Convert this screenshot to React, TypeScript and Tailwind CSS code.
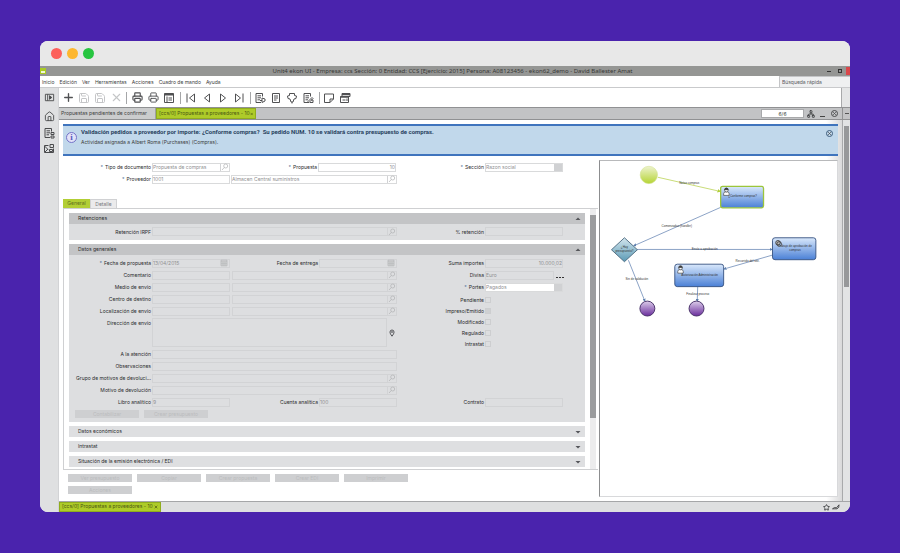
import { ReactNode } from "react";
import { Home, Network, Plus, Printer, Save, Star, X } from "lucide-react";

const menus = ["Inicio", "Edición", "Ver", "Herramientas", "Acciones", "Cuadro de mando", "Ayuda"];

function Glyph({ children, className = "" }: { children: ReactNode; className?: string }) {
  return (
    <svg
      viewBox="0 0 12 12"
      className={`h-3 w-3 shrink-0 ${className}`}
      fill="none"
      stroke="currentColor"
      strokeWidth="1"
      strokeLinejoin="round"
    >
      {children}
    </svg>
  );
}

function DocGlyph({ children }: { children?: ReactNode }) {
  return (
    <Glyph>
      <path d="M2 1.5h6.5v3M2 1.5v9h5M3.5 3.8H7M3.5 5.8H7M3.5 7.8h2.5" />
      {children}
    </Glyph>
  );
}

function ToolButton({ label, muted, children }: { label: string; muted?: boolean; children: ReactNode }) {
  return (
    <button
      type="button"
      aria-label={label}
      className={`flex w-4 shrink-0 items-center justify-center ${muted ? "text-[#c4c5c7]" : "text-[#505153]"}`}
    >
      {children}
    </button>
  );
}

function Separator() {
  return <span className="mx-px h-3 w-px shrink-0 bg-[#a5a6a8]" />;
}

function Magnifier() {
  return (
    <svg viewBox="0 0 8 8" className="h-2 w-2" fill="none" stroke="currentColor" strokeWidth="0.7">
      <circle cx="4.7" cy="3" r="2" />
      <path d="M3.3 4.5 1 7" />
    </svg>
  );
}

function CalendarMark() {
  return (
    <svg viewBox="0 0 8 8" className="h-2 w-2" fill="none" stroke="currentColor" strokeWidth="0.7">
      <path d="M1 1.2h6v5.6H1zM1 2.8h6M3 2.8v4M5 2.8v4M1 4.8h6" />
    </svg>
  );
}

type FieldProps = {
  id: string;
  value?: string;
  label?: string;
  icon?: "search" | "date" | "box";
  white?: boolean;
  right?: boolean;
  className?: string;
};

function Field({ id, value = "", label, icon, white, right, className = "w-[78px]" }: FieldProps) {
  return (
    <span
      className={`flex h-[9px] shrink-0 items-center border ${
        white ? "border-[#d9dadb] bg-white" : "border-[#d2d3d5]"
      } ${className}`}
    >
      <input
        id={id}
        aria-label={label}
        defaultValue={value}
        className={`h-full w-full min-w-0 bg-transparent text-[5px] leading-[7px] text-[#8f9092] outline-none ${
          right ? "text-right" : ""
        }`}
      />
      {icon === "search" && (
        <span className="flex h-full w-[9px] shrink-0 items-center border-l border-[#d2d3d5] text-[#b0b1b3]">
          <Magnifier />
        </span>
      )}
      {icon === "date" && (
        <span className="flex h-full w-[9px] shrink-0 items-center text-[#b0b1b3]">
          <CalendarMark />
        </span>
      )}
      {icon === "box" && <span className="h-full w-2 shrink-0 bg-[#d0d1d3]" />}
    </span>
  );
}

function Label({ id, children, req, className = "w-[83px]" }: { id: string; children: ReactNode; req?: boolean; className?: string }) {
  return (
    <label
      htmlFor={id}
      className={`shrink-0 truncate pr-px text-right text-[5px] leading-[10px] text-[#2a2b2d] ${className}`}
    >
      {req && <span className="mr-0.5 text-[#55759c]">*</span>}
      {children}
    </label>
  );
}

function Row({ children }: { children: ReactNode }) {
  return <div className="flex h-[10px] items-center">{children}</div>;
}

function Section({ title, children }: { title: string; children: ReactNode }) {
  return (
    <section className="bg-[#dddee0]">
      <h2 className="flex h-[11px] items-center justify-between bg-[#c3c4c6] pl-[9px] pr-1 text-[5px] text-[#2a2b2d]">
        {title}
        <svg viewBox="0 0 6 4" className="h-1 w-1.5">
          <path d="M3 .5 5.5 3h-5z" fill="#55565a" />
        </svg>
      </h2>
      {children}
    </section>
  );
}

function Collapsed({ title }: { title: string }) {
  return (
    <button
      type="button"
      className="flex h-[11px] w-full shrink-0 items-center justify-between bg-[#dedfe1] pl-[9px] pr-1 text-[5px] text-[#2a2b2d]"
    >
      {title}
      <svg viewBox="0 0 6 4" className="h-1 w-1.5">
        <path d="M3 3.5.5 1h5z" fill="#55565a" />
      </svg>
    </button>
  );
}

function GrayButton({ children }: { children: ReactNode }) {
  return (
    <button
      type="button"
      className="h-2 w-[64px] shrink-0 truncate bg-[#cecfd1] text-center text-[5px] leading-[8px] text-[#bbbcbe]"
    >
      {children}
    </button>
  );
}

const lookups = [
  ["comentario", "Comentario"],
  ["medio", "Medio de envío"],
  ["centro", "Centro de destino"],
  ["localizacion", "Localización de envío"],
];

const checks = [
  { id: "pendiente", label: "Pendiente" },
  { id: "impreso", label: "Impreso/Emitido", on: true },
  { id: "modificado", label: "Modificado" },
  { id: "regulado", label: "Regulado" },
  { id: "intrastat", label: "Intrastat" },
];

function DatosGenerales() {
  return (
    <Section title="Datos generales">
      <div className="flex pt-[3px]">
        <div className="flex w-[328px] shrink-0 flex-col gap-0.5">
          <Row>
            <Label id="fecha" req>Fecha de propuesta</Label>
            <Field id="fecha" value="13/04/2015" icon="date" />
            <Label id="entrega" className="w-[89px]">Fecha de entrega</Label>
            <Field id="entrega" icon="date" />
          </Row>
          {lookups.map(([id, label]) => (
            <Row key={id}>
              <Label id={id}>{label}</Label>
              <Field id={id} />
              <span className="w-0.5" />
              <Field id={`${id}-desc`} label={`${label}, descripción`} icon="search" className="w-[165px]" />
            </Row>
          ))}
          <div className="flex h-[29px]">
            <Label id="direccion" className="w-[83px] self-start">Dirección de envío</Label>
            <textarea
              id="direccion"
              className="h-full w-[235px] shrink-0 resize-none border border-[#d2d3d5] text-[5px] outline-none"
            />
            <svg viewBox="0 0 6 8" className="ml-0.5 h-2 w-1.5 self-center" fill="none" stroke="#55565a">
              <path d="M3 7.2C1.6 5.3 1 4.300 1 3a2 2 0 0 1 4 0c0 1.300-.6 2.300-2 4.200z" />
              <circle cx="3" cy="3" r=".5" />
            </svg>
          </div>
          <Row>
            <Label id="atencion">A la atención</Label>
            <Field id="atencion" className="w-[245px]" />
          </Row>
          <Row>
            <Label id="observaciones">Observaciones</Label>
            <Field id="observaciones" className="w-[245px]" />
          </Row>
          <Row>
            <Label id="grupo">Grupo de motivos de devoluci...</Label>
            <Field id="grupo" icon="search" className="w-[245px]" />
          </Row>
          <Row>
            <Label id="motivo">Motivo de devolución</Label>
            <Field id="motivo" icon="search" className="w-[245px]" />
          </Row>
          <Row>
            <Label id="libro">Libro analítico</Label>
            <Field id="libro" value="9" />
            <Label id="cuenta" className="w-[89px]">Cuenta analítica</Label>
            <Field id="cuenta" value="100" />
          </Row>
        </div>
        <div className="flex flex-col gap-0.5">
          <Row>
            <Label id="suma" className="w-[88px]">Suma importes</Label>
            <Field id="suma" value="10.000,02" right />
          </Row>
          <Row>
            <Label id="divisa" className="w-[88px]">Divisa</Label>
            <Field id="divisa" value="Euro" className="w-[69px]" />
            <button type="button" aria-label="Elegir divisa" className="ml-0.5 flex gap-px self-end pb-0.5">
              <span className="h-px w-0.5 bg-[#333]" />
              <span className="h-px w-0.5 bg-[#333]" />
              <span className="h-px w-0.5 bg-[#333]" />
            </button>
          </Row>
          <Row>
            <Label id="portes" req className="w-[88px]">Portes</Label>
            <Field id="portes" value="Pagados" white icon="box" />
          </Row>
          <div>
            {checks.map((c) => (
              <div key={c.id} className="flex h-[11px] items-center">
                <Label id={c.id} className="w-[88px]">{c.label}</Label>
                <input
                  id={c.id}
                  type="checkbox"
                  defaultChecked={c.on}
                  className="h-[6px] w-[6px] appearance-none border border-[#cdced0] checked:bg-[#cfd0d2]"
                />
              </div>
            ))}
          </div>
          <div className="mt-auto">
            <Row>
              <Label id="contrato" className="w-[88px]">Contrato</Label>
              <Field id="contrato" />
            </Row>
          </div>
        </div>
      </div>
      <div className="flex gap-[5px] pb-1 pl-[6px] pt-[3px]">
        <GrayButton>Contabilizar</GrayButton>
        <GrayButton>Crear presupuesto</GrayButton>
      </div>
    </Section>
  );
}

function Person({ x, y }: { x: number; y: number }) {
  return (
    <g transform={`translate(${x} ${y})`} stroke="#333" strokeWidth=".6" fill="#fff">
      <path d="M0 7.500V5.800Q0 4.300 1.500 4h2.500Q5.500 4.300 5.500 5.800v1.700z" />
      <circle cx="2.750" cy="2.100" r="1.900" />
      <path d="M1 1.800Q1 .2 2.750.2T4.500 1.800z" fill="#333" />
    </g>
  );
}

function Diagram() {
  return (
    <svg viewBox="0 0 238 336" className="w-full" fontFamily="Liberation Sans, sans-serif" fontSize="3" fill="#333" textAnchor="middle">
      <defs>
        <linearGradient id="task" x1="0" y1="0" x2="0" y2="1">
          <stop offset="0" stopColor="#d9e8fb" />
          <stop offset="1" stopColor="#4a80d6" />
        </linearGradient>
        <linearGradient id="start" x1="0" y1="0" x2="0" y2="1">
          <stop offset="0" stopColor="#eef3cf" />
          <stop offset="1" stopColor="#b5d433" />
        </linearGradient>
        <linearGradient id="end" x1="0" y1="0" x2="0" y2="1">
          <stop offset="0" stopColor="#dccdea" />
          <stop offset="1" stopColor="#6a2d9c" />
        </linearGradient>
        <linearGradient id="gate" x1="0" y1="0" x2="0" y2="1">
          <stop offset="0" stopColor="#d3e6ee" />
          <stop offset="1" stopColor="#5b9ab5" />
        </linearGradient>
        <marker id="arrow" markerWidth="4" markerHeight="4" refX="3" refY="2" orient="auto">
          <path d="M0 0 4 2 0 4z" fill="#5d7fae" />
        </marker>
        <marker id="arrow-green" markerWidth="4" markerHeight="4" refX="3" refY="2" orient="auto">
          <path d="M0 0 4 2 0 4z" fill="#b2cf3a" />
        </marker>
      </defs>

      <path d="M58 16.300 120.500 30.500" stroke="#c3d868" strokeWidth=".9" markerEnd="url(#arrow-green)" />
      <g stroke="#6f8cb8" strokeWidth=".8" markerEnd="url(#arrow)">
        <path d="M121 46.500 34 85" />
        <path d="M37 88.700H172.500" />
        <path d="M172.500 94.500 124.500 108.300" />
        <path d="M28.500 99.500 45 140.500" />
        <path d="M98 126 97.500 140.500" />
      </g>

      <circle cx="49" cy="14" r="8.700" fill="url(#start)" stroke="#d5e296" strokeWidth=".6" />
      <rect x="121" y="25.500" width="43" height="21.500" rx="2" fill="url(#task)" stroke="#9cc53b" strokeWidth="1.300" />
      <path d="M24.500 77 37.500 89 24.500 101 11.500 89z" fill="url(#gate)" stroke="#48667c" strokeWidth=".9" />
      <rect x="173" y="77" width="43.500" height="22" rx="2.500" fill="url(#task)" stroke="#35507f" strokeWidth=".9" />
      <rect x="75" y="103.500" width="49" height="22.500" rx="2.500" fill="url(#task)" stroke="#35507f" strokeWidth=".9" />
      <circle cx="47.500" cy="148" r="7.500" fill="url(#end)" stroke="#3f2860" strokeWidth=".9" />
      <circle cx="96.800" cy="148" r="7.500" fill="url(#end)" stroke="#3f2860" strokeWidth=".9" />

      <Person x={124} y={27} />
      <Person x={78} y={105} />
      <g fill="none" stroke="#333" strokeWidth=".8">
        <circle cx="178.500" cy="82" r="2.300" fill="#bbb" />
        <circle cx="179.700" cy="83.200" r="2.300" />
      </g>

      <text x="89.500" y="23.500">Notas compras</text>
      <text x="143" y="36.500">¿Conforme compras?</text>
      <text x="77" y="66">Comenzadas (handler)</text>
      <text x="24.500" y="87">¿Hay</text>
      <text x="24.500" y="91">presupuesto?</text>
      <text x="105" y="89">Envío a aprobación</text>
      <text x="195.500" y="86">Trabajo de aprobación de</text>
      <text x="195.500" y="90">compras</text>
      <text x="148" y="101">Recurrido del sist.</text>
      <text x="100" y="115.500">Autorización Administración</text>
      <text x="37" y="119.500">Sin de validación</text>
      <text x="98" y="134">Finalizar proceso</text>
    </svg>
  );
}

export default function App() {
  return (
    <div className="flex min-h-screen bg-[#4a23ad] py-[41px] pl-10 pr-[50px] font-[Inter,Arial,sans-serif] text-[5px] text-[#3d3e40]">
      <main className="flex min-w-0 flex-1 flex-col overflow-hidden rounded-lg bg-white">
        <div className="flex h-[25px] items-center gap-[5px] bg-[#e8e8e8] pl-[11px]">
          <span className="h-[11px] w-[11px] rounded-full bg-[#fc605b]" />
          <span className="h-[11px] w-[11px] rounded-full bg-[#fdb72f]" />
          <span className="h-[11px] w-[11px] rounded-full bg-[#27c540]" />
        </div>

        <header className="flex h-[10px] items-center bg-[#959694]">
          <span className="flex h-1.5 w-1.5 items-end bg-[#aacb24] p-px">
            <span className="h-0.5 w-full bg-[#f2f7d8]" />
          </span>
          <h1 className="min-w-0 flex-1 pl-8 text-center font-['Noto_Sans',sans-serif] text-[6px] leading-[10px] text-[#353634]">
            Unit4 ekon UI - Empresa: ccs Sección: 0 Entidad: CCS [Ejercicio: 2015] Persona: A08123456 - ekon62_demo - David Ballester Amat
          </h1>
          <button type="button" aria-label="Minimizar" className="mr-[7px] h-px w-1 bg-[#333]" />
          <button type="button" aria-label="Restaurar" className="mr-1 h-1 w-1 border border-[#333]" />
          <button type="button" aria-label="Cerrar" className="h-2 w-1 bg-[#d9474b]" />
        </header>

        <nav className="flex h-3 items-center border-b border-[#c9cacc] pl-0.5">
          <ul className="flex flex-1 gap-[5px] leading-[10px]">
            {menus.map((m) => (
              <li key={m}>
                <button type="button">{m}</button>
              </li>
            ))}
          </ul>
          <input
            aria-label="Búsqueda rápida"
            placeholder="Búsqueda rápida"
            className="h-[11px] w-[71px] border-l border-t border-[#c4c5c7] bg-[#eff0f1] pl-0.5 text-[5px] outline-none placeholder:text-[#5c5d5f]"
          />
        </nav>

        <div className="flex min-h-0 flex-1">
          <aside className="flex w-[19px] shrink-0 flex-col items-center border-r border-[#d2d3d5] bg-[#dfe0e1] text-[#4a4b4d]">
            <button type="button" aria-label="Panel" className="mt-[4px]">
              <Glyph className="h-[11px] w-[11px]">
                <path d="M1.500 2.500h9v7h-9zM4 2.500v7" />
                <path d="m6 4 2.500 2L6 8z" fill="currentColor" />
              </Glyph>
            </button>
            <button type="button" aria-label="Inicio" className="mt-[8px]">
              <Home size={11} strokeWidth={2} />
            </button>
            <button type="button" aria-label="Documentos" className="mt-[5px]">
              <DocGlyph>
                <path d="M8 5.500h3v2H8zM8 9h3v2H8z" />
              </DocGlyph>
            </button>
            <button type="button" aria-label="Procesos" className="mt-1">
              <Glyph>
                <path d="M5.500 2.500h-4v7h9v-4M1.500 3l3.500 3.500M2 9l3-3M7 1.500h3.500v3H7zM6.500 6.500h3v2h-3z" />
              </Glyph>
            </button>
          </aside>

          <div className="flex min-w-0 flex-1 flex-col">
            <div className="flex h-[19px] shrink-0">
              <div className="flex min-w-0 flex-1 items-center border-r border-[#a8a9ab] pl-px">
                <ToolButton label="Nuevo"><Plus size={13} strokeWidth={2.500} /></ToolButton>
                <ToolButton label="Guardar" muted><Save size={12} /></ToolButton>
                <ToolButton label="Guardar y cerrar" muted><Save size={12} /></ToolButton>
                <ToolButton label="Eliminar" muted><X size={13} /></ToolButton>
                <span className="w-px" />
                <Separator />
                <span className="w-px" />
                <ToolButton label="Imprimir"><Printer size={11} strokeWidth={2.500} /></ToolButton>
                <ToolButton label="Imprimir listado"><Printer size={11} /></ToolButton>
                <ToolButton label="Tabla">
                  <Glyph>
                    <path d="M1.500 1.500h9v9h-9zM4 4.500v6M5.500 6h3.500M5.500 8h3.500" />
                    <path d="M1.500 2.500h9" strokeWidth="2" />
                  </Glyph>
                </ToolButton>
                <span className="w-0.5" />
                <Separator />
                <span className="w-px" />
                <ToolButton label="Primero">
                  <Glyph><path d="M2 1.500v9M9.500 2 4.500 6l5 4z" /></Glyph>
                </ToolButton>
                <ToolButton label="Anterior">
                  <Glyph><path d="M8.500 2 3.500 6l5 4z" /></Glyph>
                </ToolButton>
                <ToolButton label="Siguiente">
                  <Glyph><path d="m3.500 2 5 4-5 4z" /></Glyph>
                </ToolButton>
                <ToolButton label="Último">
                  <Glyph><path d="M10 1.500v9M2.500 2l5 4-5 4z" /></Glyph>
                </ToolButton>
                <span className="w-0.5" />
                <Separator />
                <ToolButton label="Enviar documento">
                  <DocGlyph><path d="M6 8.500h2M8 6l3 1v2l-3 1.500z" /></DocGlyph>
                </ToolButton>
                <ToolButton label="Documento">
                  <Glyph><path d="M2.500 1.500h7v9h-7zM4 4h4M4 6h4M4 8h2.500" /></Glyph>
                </ToolButton>
                <ToolButton label="Flujo">
                  <Glyph><path d="M3.500 1.500h5v2l2 .5-.5 2.500-2 .5-1 3H5l-1-3-2-.5L1.500 4l2-.5zM6 10v1.500" /></Glyph>
                </ToolButton>
                <ToolButton label="Editar documento">
                  <DocGlyph><path d="m6 9.500 4-4 1 1-4 4zM9 8h2v2.500H8" /></DocGlyph>
                </ToolButton>
                <span className="w-0.5" />
                <Separator />
                <ToolButton label="Nota">
                  <Glyph><path d="M1.500 2h9v5L7 10.500H1.500zM10.500 7H7v3.500" /></Glyph>
                </ToolButton>
                <ToolButton label="Historial">
                  <Glyph>
                    <path d="M3 1.500h8v3H3zM1.500 4.500h8v6h-8zM3.500 8h3M8 6.500v2.500" />
                    <path d="M3 2.500h8M1.500 5h8" strokeWidth="1.500" />
                  </Glyph>
                </ToolButton>
              </div>
              <div className="w-2 bg-[#e4e5e6]" />
            </div>

            <div className="flex h-[13px] shrink-0 items-center border-y border-[#909193] bg-[#c2c3c5]">
              <button type="button" className="h-full w-[97px] truncate border-r border-[#a0a1a3] bg-[#cbcccd] pl-0.5 text-left">
                Propuestas pendientes de confirmar
              </button>
              <button type="button" className="flex h-full w-[100px] items-center justify-between border border-[#90ad1d] bg-[#aecb29] px-0.5 text-[#4a5613]">
                <span className="whitespace-nowrap">[ccs/0] Propuestas a proveedores - 10</span>
                <X size={4} strokeWidth={4} />
              </button>
              <span className="flex-1" />
              <input
                aria-label="Registro"
                defaultValue="6/6"
                className="h-[9px] w-[43px] border border-[#a8a9ab] bg-white text-center text-[5px] outline-none"
              />
              <button type="button" aria-label="Esquema" className="ml-[3px]"><Network size={8} strokeWidth={2.500} /></button>
              <button type="button" aria-label="Minimizar panel" className="ml-[5px] mt-1.5 h-px w-[5px] bg-[#444]" />
              <button type="button" aria-label="Cerrar panel" className="ml-1.5 flex h-[7px] w-[7px] items-center justify-center rounded-full border border-[#4a4b4d]">
                <X size={5} strokeWidth={3} />
              </button>
              <span className="ml-1 flex h-full w-2 items-center border-l border-[#909193] pl-0.5">
                <span className="h-px w-1 bg-[#555]" />
              </span>
            </div>

            <div className="flex min-h-0 flex-1">
              <div className="flex min-w-0 flex-1 flex-col bg-linear-to-r from-white from-98% to-[#d9d9da] p-1">
                <section className="flex h-8 shrink-0 items-start border-y-2 border-[#3f74bd] bg-[#c1d8eb] pt-0.5">
                  <span className="ml-[3px] mt-1 flex h-[11px] w-[11px] shrink-0 items-center justify-center rounded-full border border-[#7474c8] bg-[#e2e2f8] font-['Liberation_Serif',serif] text-[9px] font-bold leading-none text-[#5959bd]">
                    i
                  </span>
                  <div className="ml-1 min-w-0 flex-1">
                    <p className="font-[Roboto,sans-serif] text-[6px] font-bold leading-[8px] text-[#29435f]">
                      Validación pedidos a proveedor por importe: ¿Conforme compras?&nbsp; Su pedido NUM. 10 se validará contra presupuesto de compras.
                    </p>
                    <p className="pt-0.5 leading-[8px]">Actividad asignada a Albert Roma (Purchases) (Compras).</p>
                  </div>
                  <button type="button" aria-label="Cerrar aviso" className="mr-[5px] mt-0.5 flex h-[7px] w-[7px] items-center justify-center rounded-full border border-[#3d5c7c]">
                    <X size={5} strokeWidth={3} />
                  </button>
                </section>

                <div className="grid min-h-0 flex-1 grid-cols-[535fr_239fr] pt-1">
                  <div className="flex min-w-0 flex-col pt-0.5">
                    <div className="flex flex-col gap-0.5 pl-[6px]">
                      <Row>
                        <Label id="tipo" req>Tipo de documento</Label>
                        <Field id="tipo" value="Propuesta de compras" icon="search" white />
                        <Label id="propuesta" req className="w-[88px]">Propuesta</Label>
                        <Field id="propuesta" value="10" white right />
                        <Label id="seccion" req className="w-[89px]">Sección</Label>
                        <Field id="seccion" value="Razon social" icon="box" white />
                      </Row>
                      <Row>
                        <Label id="proveedor" req>Proveedor</Label>
                        <Field id="proveedor" value="1001" white />
                        <span className="w-px" />
                        <Field id="proveedor-nombre" label="Nombre del proveedor" value="Almacen Central suministros" icon="search" white className="w-[166px]" />
                      </Row>
                    </div>

                    <div className="mt-[15px] flex h-[9px] shrink-0 leading-[9px]">
                      <button type="button" className="w-[27px] bg-[#b2ce35] text-[#5f6e22]">General</button>
                      <button type="button" className="w-[27px] border border-b-0 border-[#d0d1d3] bg-[#ebebec] text-[#77787a]">Detalle</button>
                    </div>

                    <div className="mr-px flex min-h-0 border border-r-0 border-[#cfd0d2] pl-[5px] pr-0.5">
                      <div className="flex min-w-0 flex-1 flex-col gap-1 pb-0.5 pt-1">
                        <Section title="Retenciones">
                          <div className="flex py-[3px]">
                            <Label id="irpf">Retención IRPF</Label>
                            <Field id="irpf" icon="search" className="w-[245px]" />
                            <Label id="retencion" className="w-[88px]">% retención</Label>
                            <Field id="retencion" />
                          </div>
                        </Section>
                        <DatosGenerales />
                        <Collapsed title="Datos económicos" />
                        <Collapsed title="Intrastat" />
                        <Collapsed title="Situación de la emisión electrónica / EDI" />
                      </div>
                      <div className="ml-[5px] w-1.5 bg-[#ececed] pt-1.5">
                        <div className="h-4/5 bg-[#9b9c9e]" />
                      </div>
                    </div>

                    <div className="mt-1 flex flex-wrap gap-x-[5px] gap-y-1 pl-[5px] pr-[140px]">
                      <GrayButton>Ver presupuesto</GrayButton>
                      <GrayButton>Copiar</GrayButton>
                      <GrayButton>Crear propuesta</GrayButton>
                      <GrayButton>Crear EDI</GrayButton>
                      <GrayButton>Imprimir</GrayButton>
                      <GrayButton>Acciones</GrayButton>
                    </div>
                  </div>

                  <div className="min-w-0 border border-l-[#8c8d8f] border-t-[#b8b9bb] border-b-[#d8d9db] border-r-[#d8d9db] bg-white">
                    <Diagram />
                  </div>
                </div>
              </div>
              <div className="w-2 shrink-0 border-l border-[#a8a9ab] bg-[#e2e3e4] px-px pt-1.5">
                <div className="h-[43%] bg-[#97989a]" />
              </div>
            </div>

            <footer className="flex h-[11px] shrink-0 items-center border-t border-[#a5a6a8] bg-[#dedfe0]">
              <button type="button" className="flex h-full w-[102px] items-center justify-between border border-[#90ad1d] bg-[#aecb29] px-0.5 text-[#4a5613]">
                <span className="whitespace-nowrap">[ccs/0] Propuestas a proveedores - 10</span>
                <X size={4} strokeWidth={4} />
              </button>
              <span className="flex-1" />
              <button type="button" aria-label="Favoritos"><Star size={7} strokeWidth={3} /></button>
              <button type="button" aria-label="Conexión" className="ml-0.5 mr-[10px]">
                <svg viewBox="0 0 8 6" className="h-1.5 w-2" fill="none" stroke="currentColor" strokeWidth=".9">
                  <path d="M.5 4.800h4.500q2.500-1 2-4L4.500 3.800q-2-1-4 1z" />
                </svg>
              </button>
            </footer>
          </div>
        </div>
      </main>
    </div>
  );
}
